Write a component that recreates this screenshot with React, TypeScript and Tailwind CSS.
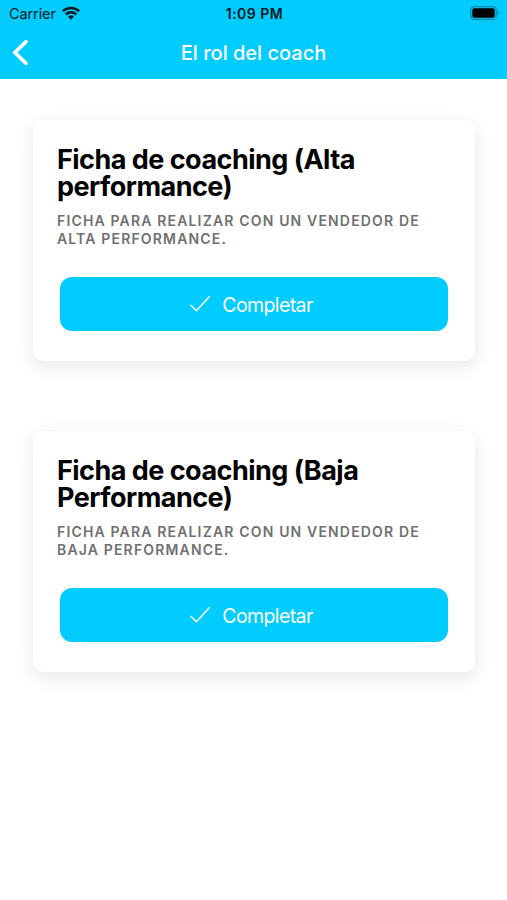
import React from 'react';

interface Ficha {
    title: string[];
    description: string[];
}

const fichas: Ficha[] = [
    {
        title: ['Ficha de coaching (Alta', 'performance)'],
        description: ['Ficha para realizar con un vendedor de', 'alta performance.'],
    },
    {
        title: ['Ficha de coaching (Baja', 'Performance)'],
        description: ['Ficha para realizar con un vendedor de', 'baja performance.'],
    },
];

function WifiIcon() {
    return (
        <svg className="-mt-0.5" width="18" height="14" viewBox="0 0 18 14" fill="none" stroke="#001820" strokeWidth="2.5">
            <path d="M0.9 5.2a11.6 11.6 0 0 1 16.2 0" />
            <path d="M3.8 8.5a7.4 7.4 0 0 1 10.4 0" />
            <path d="M9 13.8 6.1 10.8a4.1 4.1 0 0 1 5.8 0z" fill="#001820" stroke="none" />
        </svg>
    );
}

function BatteryIcon() {
    return (
        <svg className="-mt-0.5" width="30" height="14" viewBox="0 0 30 14">
            <rect x="0.7" y="0.7" width="25.6" height="12.6" rx="3.6" fill="none" stroke="#0587a8" strokeWidth="1.3" />
            <rect x="2.3" y="2.3" width="22.4" height="9.4" rx="2" fill="#000" />
            <path d="M27.6 4.8c1.9.7 1.9 3.7 0 4.4z" fill="#0587a8" />
        </svg>
    );
}

function StatusBar() {
    return (
        <div className="grid grid-cols-3 items-center h-[27px] pl-[9px] pr-[7px] text-[#001820]">
            <div className="flex items-center gap-[6px]">
                <span className="text-[14.5px] tracking-[-0.1px]">Carrier</span>
                <WifiIcon />
            </div>
            <span className="text-[14px] font-semibold tracking-[0.5px] text-center whitespace-nowrap">1:09 PM</span>
            <div className="flex justify-end">
                <BatteryIcon />
            </div>
        </div>
    );
}

function FichaCard({ title, description }: Ficha) {
    return (
        <div className="h-[241px] pt-[26px] pl-6 pr-[27px] bg-white rounded-[10px] shadow-[0_5px_18px_rgba(0,0,0,0.1)]">
            <h2 className="text-[27px] leading-[27px] font-bold tracking-[-0.52px] text-black whitespace-nowrap">
                {title.map((line) => (
                    <span key={line} className="block">{line}</span>
                ))}
            </h2>
            <p className="mt-[12px] text-[14px] leading-[18px] font-semibold tracking-[1.16px] text-[#707070] uppercase whitespace-nowrap">
                {description.map((line) => (
                    <span key={line} className="block">{line}</span>
                ))}
            </p>
            <button className="flex items-center justify-center gap-[12px] w-[388px] h-[54px] ml-[3px] mt-[29px] pr-[5px] rounded-xl bg-[#00ccff] text-white text-[19.5px]">
                <svg width="20" height="16" viewBox="0 0 20 16" fill="none" stroke="white" strokeWidth="1.5">
                    <path d="M0.8 9.2 6.4 14.8 19.2 0.8" strokeLinecap="round" strokeLinejoin="round" />
                </svg>
                <span className="tracking-[-0.6px] pt-[3px]">Completar</span>
            </button>
        </div>
    );
}

export default function App() {
    return (
        <div className="min-h-[900px] w-full bg-white font-['Inter',sans-serif]">
            <header className="h-[79px] bg-[#00ccff]">
                <StatusBar />
                <div className="grid grid-cols-[40px_1fr_40px] items-center h-[50px]">
                    <svg className="ml-3" width="17" height="27" viewBox="0 0 17 27" fill="none" stroke="white" strokeWidth="3.6">
                        <path d="M14 2.6 2.9 13.5 14 24.4" strokeLinecap="round" />
                    </svg>
                    <h1 className="pt-px text-[20px] font-medium text-center text-white">El rol del coach</h1>
                </div>
            </header>

            <main className="flex flex-col gap-[70px] pt-[41px] pl-[33px] pr-8">
                {fichas.map((ficha) => (
                    <FichaCard key={ficha.title[0]} {...ficha} />
                ))}
            </main>
        </div>
    );
}
